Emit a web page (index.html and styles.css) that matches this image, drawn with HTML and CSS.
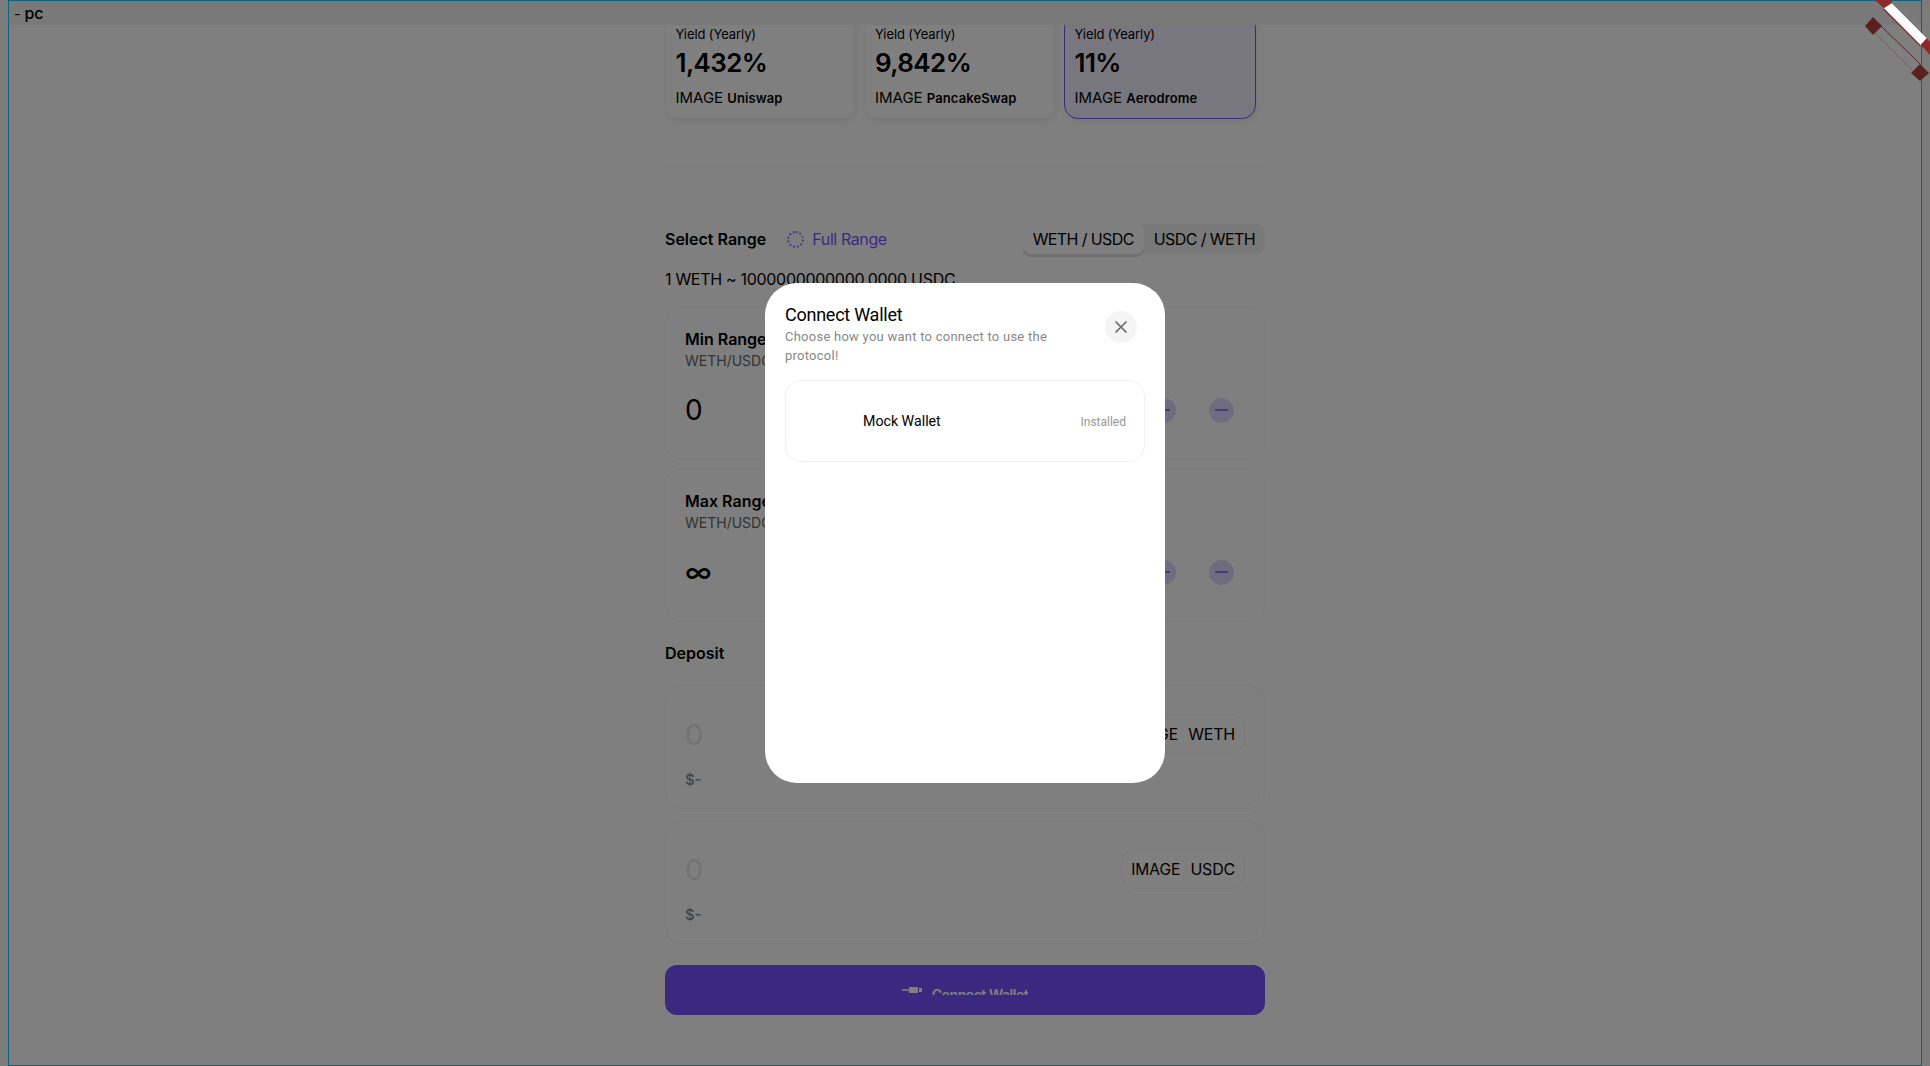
FILE: index.html
```html
<!DOCTYPE html>
<html lang="en">
<head>
  <meta charset="UTF-8" />
  <meta name="viewport" content="width=device-width, initial-scale=1.0"/>
  <title>Connect Wallet</title>
  <link rel="stylesheet" href="styles.css">
</head>
<body>
  <div class="frame">
    <div class="topbar">- <span class="topbar-name">pc</span></div>

    <main class="content">
      <div class="pools">
        <div class="pool">
          <div class="pool-label">Yield (Yearly)</div>
          <div class="pool-yield">1,432%</div>
          <div class="pool-dex">IMAGE <b>Uniswap</b></div>
        </div>
        <div class="pool">
          <div class="pool-label">Yield (Yearly)</div>
          <div class="pool-yield">9,842%</div>
          <div class="pool-dex">IMAGE <b>PancakeSwap</b></div>
        </div>
        <div class="pool pool-selected">
          <div class="pool-label">Yield (Yearly)</div>
          <div class="pool-yield">11%</div>
          <div class="pool-dex">IMAGE <b>Aerodrome</b></div>
        </div>
      </div>

      <hr class="divider">

      <div class="range-head">
        <span class="section-title">Select Range</span>
        <span class="radio"></span>
        <span class="full-range">Full Range</span>
        <div class="pair-toggle">
          <span class="pair pair-active">WETH / USDC</span>
          <span class="pair">USDC / WETH</span>
        </div>
      </div>
      <div class="rate">1 WETH ~ 1000000000000.0000 USDC</div>

      <section class="range-card">
        <div class="range-title">Min Range</div>
        <div class="range-unit">WETH/USDC</div>
        <div class="range-row">
          <span class="range-value">0</span>
          <div class="steppers">
            <span class="stepper"><i></i></span>
            <span class="stepper"><i></i></span>
          </div>
        </div>
      </section>

      <section class="range-card range-card-max">
        <div class="range-title">Max Range</div>
        <div class="range-unit">WETH/USDC</div>
        <div class="range-row">
          <span class="range-value range-infinity">∞</span>
          <div class="steppers">
            <span class="stepper"><i></i></span>
            <span class="stepper"><i></i></span>
          </div>
        </div>
      </section>

      <div class="section-title deposit-title">Deposit</div>

      <section class="deposit-card">
        <div class="deposit-row">
          <span class="deposit-value">0</span>
          <div class="token">IMAGE <span>WETH</span></div>
        </div>
        <div class="deposit-usd">$-</div>
      </section>

      <section class="deposit-card deposit-card-last">
        <div class="deposit-row">
          <span class="deposit-value">0</span>
          <div class="token">IMAGE <span>USDC</span></div>
        </div>
        <div class="deposit-usd">$-</div>
      </section>

      <button class="connect-btn" type="button">
        <span class="connect-inner">
          <svg class="plug" width="20" height="10" viewBox="0 0 20 10">
            <rect x="0" y="4.2" width="7" height="1.6" fill="#fff"/>
            <rect x="7" y="2" width="9" height="6" fill="#fff"/>
            <rect x="17" y="3" width="3" height="4" fill="#fff"/>
          </svg>
          <span class="connect-text">Connect Wallet</span>
        </span>
      </button>
    </main>
  </div>

  <!-- fond sombre + fenetre -->
  <div class="overlay">
    <div class="modal">
      <div class="modal-head">
        <div>
          <div class="modal-title">Connect Wallet</div>
          <p class="modal-sub">Choose how you want to connect to use the protocol!</p>
        </div>
        <span class="modal-close">
          <svg width="14" height="14" viewBox="0 0 14 14">
            <path d="M1.5 1.5 12.5 12.5M12.5 1.5 1.5 12.5" stroke="#666" stroke-width="1.6" fill="none"/>
          </svg>
        </span>
      </div>
      <div class="wallet">
        <span class="wallet-name">Mock Wallet</span>
        <span class="wallet-state">Installed</span>
      </div>
    </div>
  </div>

  <!-- ruban du coin -->
  <svg class="corner" width="100" height="90" viewBox="0 0 100 90">
    <polygon points="45,0 62,0 61.7,3.3 54,8.3" fill="#8c2a2a"/>
    <line x1="53.5" y1="8.8" x2="90.2" y2="45.5" stroke="#8c2a2a" stroke-width="1.5"/>
    <polygon points="54,8.3 61.7,3.3 96.7,38.3 90.7,45" fill="#fff"/>
    <polygon points="90.7,45 96.7,38.3 100,42 100,55" fill="#8c2a2a"/>
    <line x1="51" y1="26" x2="90" y2="64" stroke="#5a2020" stroke-width="1"/>
    <line x1="45" y1="33" x2="82" y2="70" stroke="#6e6666" stroke-width="1"/>
    <polygon points="43,17 52,26 43,35 35,26" fill="#5a2020"/>
    <polygon points="90,64 99,73 90,81 81,73" fill="#5a2020"/>
  </svg>
</body>
</html>
```

FILE: styles.css
```css
/* Page */
body {
  margin: 0;
  height: 100vh;
  overflow: hidden;
  background-color: #f6f6f6;
  color: #000;
  font-family: Inter, "Liberation Sans", sans-serif;
}

.frame {
  position: relative;
  box-sizing: border-box;
  height: 100%;
  margin: 0 8px;
  border: 1px solid #14c6ff;
  background-color: #fff;
  overflow: hidden;
}

.topbar {
  position: absolute;
  top: 0;
  left: 0;
  right: 0;
  height: 24px;
  padding-left: 5px;
  line-height: 24px;
  font-size: 14px;
  background-color: #f2f2f2;
}

.topbar-name {
  font-size: 16px;
  font-weight: 500;
}

.content {
  width: 600px;
  margin: 0 auto;
  padding-top: 13px;
}

/* Cartes du haut */
.pools {
  display: flex;
  gap: 9.5px;
}

.pool {
  box-sizing: border-box;
  width: 190px;
  height: 105px;
  padding: 9px 9.5px 0;
  border: 1px solid #f2f2f2;
  border-radius: 12px;
  box-shadow: 2px 4px 6px rgba(0, 0, 0, 0.06);
}

.pool-selected {
  width: 192px;
  border: 1.5px solid #7454ff;
  border-radius: 14px;
  background-color: rgba(116, 84, 255, 0.1);
}

.pool-label {
  font-size: 13px;
  line-height: 20px;
  letter-spacing: -0.1px;
}

.pool-yield {
  margin-top: 1px;
  font-size: 26px;
  font-weight: 600;
  line-height: 36px;
  letter-spacing: -0.6px;
}

.pool-dex {
  margin-top: 7px;
  font-size: 15px;
  line-height: 20px;
}

.pool-dex b {
  font-size: 13px;
  font-weight: 600;
  letter-spacing: 0.1px;
}

.divider {
  margin: 47px 0 57px;
  border: 0;
  border-top: 1px solid #f2f2f2;
}

/* Select range */
.range-head {
  display: flex;
  align-items: center;
  height: 30px;
}

.section-title {
  font-size: 16px;
  font-weight: 600;
  line-height: 20px;
}

.radio {
  box-sizing: border-box;
  width: 17px;
  height: 17px;
  margin: 0 8px 0 21px;
  border: 2px dotted #8f7aff;
  border-radius: 50%;
}

.full-range {
  font-size: 16px;
  letter-spacing: -0.4px;
  color: #7454ff;
}

.pair-toggle {
  display: flex;
  margin-left: auto;
  border-radius: 8px;
  background-color: #f2f2f2;
}

.pair {
  padding: 0 10px;
  font-size: 16px;
  line-height: 30px;
  letter-spacing: -0.6px;
}

.pair-active {
  border-radius: 8px;
  background-color: #fff;
  box-shadow: 0 3px 0 #e0e0e0;
}

.rate {
  margin-top: 15px;
  font-size: 16px;
  line-height: 20px;
  letter-spacing: -0.3px;
}

/* Min / Max */
.range-card {
  box-sizing: border-box;
  height: 153px;
  margin-top: 18px;
  padding: 21px 30px 0 19px;
  border: 1px solid #f2f2f2;
  border-radius: 16px;
}

.range-card-max {
  height: 154px;
  margin-top: 8px;
  padding-top: 22px;
}

.range-title {
  font-size: 16px;
  font-weight: 600;
  line-height: 20px;
}

.range-unit {
  margin-top: 2px;
  font-size: 14px;
  line-height: 20px;
  color: #666;
}

.range-row {
  display: flex;
  align-items: center;
  justify-content: space-between;
  height: 40px;
  margin-top: 19px;
}

.range-value {
  font-size: 28px;
}

.range-infinity {
  font-weight: 500;
}

.steppers {
  display: flex;
  gap: 33px;
}

.stepper {
  display: flex;
  align-items: center;
  justify-content: center;
  width: 25px;
  height: 25px;
  border-radius: 50%;
  background-color: rgba(116, 84, 255, 0.22);
}

.stepper i {
  width: 13px;
  height: 2px;
  background-color: #8a70ff;
}

/* Deposit */
.deposit-title {
  margin-top: 21px;
}

.deposit-card {
  box-sizing: border-box;
  height: 124px;
  margin-top: 12px;
  padding: 28px 19px 0 19px;
  border: 1px solid #f2f2f2;
  border-radius: 16px;
}

.deposit-title + .deposit-card {
  margin-top: 22px;
}

.deposit-card-last {
  height: 123px;
  padding-top: 27px;
}

.deposit-row {
  display: flex;
  align-items: center;
  justify-content: space-between;
}

.deposit-value {
  font-size: 29px;
  color: #e6e6e6;
}

.token {
  display: flex;
  align-items: center;
  gap: 10px;
  box-sizing: border-box;
  height: 40px;
  padding: 0 9px;
  border: 1px solid #f2f2f2;
  border-radius: 14px;
  font-size: 15.5px;
}

.token span {
  font-size: 16px;
  letter-spacing: -0.2px;
}

.deposit-usd {
  margin-top: 16px;
  font-size: 15px;
  line-height: 20px;
  font-weight: 500;
  color: #888;
}

/* Bouton */
.connect-btn {
  display: flex;
  align-items: center;
  justify-content: center;
  width: 600px;
  height: 50px;
  margin-top: 21px;
  padding: 0;
  border: 0;
  border-radius: 12px;
  background-color: #7454ff;
  color: #fff;
  font-family: inherit;
}

.connect-inner {
  display: flex;
  align-items: flex-start;
  gap: 10px;
  height: 10px;
  overflow: hidden;
}

.connect-text {
  font-size: 14px;
  font-weight: 600;
  line-height: 20px;
  letter-spacing: -0.45px;
}

/* Fenetre */
.overlay {
  position: fixed;
  top: 0;
  left: 0;
  right: 0;
  bottom: 0;
  display: flex;
  align-items: center;
  justify-content: center;
  background-color: rgba(0, 0, 0, 0.5);
}

.modal {
  box-sizing: border-box;
  width: 400px;
  height: 500px;
  padding: 20px;
  border-radius: 32px;
  background-color: #fff;
  font-family: Roboto, "Liberation Sans", sans-serif;
}

.modal-head {
  display: flex;
  align-items: flex-start;
  justify-content: space-between;
}

.modal-title {
  font-size: 18px;
  line-height: 24px;
  letter-spacing: -0.25px;
}

.modal-sub {
  width: 290px;
  margin: 0;
  font-size: 13px;
  line-height: 19px;
  letter-spacing: 0.25px;
  color: #888;
}

.modal-close {
  display: flex;
  align-items: center;
  justify-content: center;
  width: 32px;
  height: 32px;
  margin: 8px 8px 0 0;
  border-radius: 50%;
  background-color: #f5f5f5;
}

.wallet {
  display: flex;
  align-items: center;
  justify-content: space-between;
  box-sizing: border-box;
  height: 82px;
  margin-top: 15px;
  padding: 0 18px 0 77px;
  border: 1px solid #f0f0f0;
  border-radius: 16px;
}

.wallet-name {
  font-size: 14.2px;
}

.wallet-state {
  margin-top: 1px;
  font-size: 12px;
  color: #999;
}

.corner {
  position: fixed;
  top: 0;
  right: 0;
}
```
